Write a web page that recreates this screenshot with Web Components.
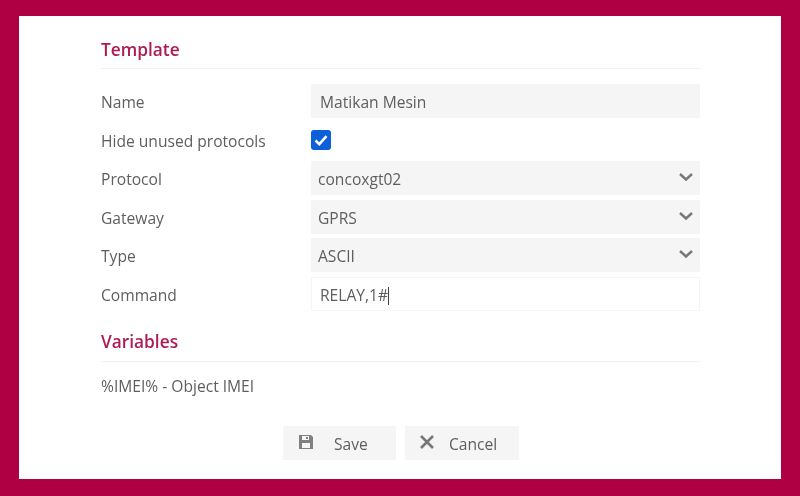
<!DOCTYPE html>
<html><head><meta charset="utf-8">
<style>
html,body{margin:0;padding:0;height:100%}
body{background:#ae0043;font-family:"Open Sans",sans-serif;font-size:15.6px;color:#5e5e5e}
</style></head>
<body>
<template-dialog>
  <section-title>Template</section-title>
  <form-row label="Name"><field-box kind="input" value="Matikan Mesin"></field-box></form-row>
  <form-row label="Hide unused protocols"><check-box></check-box></form-row>
  <form-row label="Protocol"><field-box kind="select" value="concoxgt02"></field-box></form-row>
  <form-row label="Gateway"><field-box kind="select" value="GPRS"></field-box></form-row>
  <form-row label="Type"><field-box kind="select" value="ASCII"></field-box></form-row>
  <form-row label="Command"><field-box kind="active" value="RELAY,1#"></field-box></form-row>
  <section-title second>Variables</section-title>
  <var-note>%IMEI% - Object IMEI</var-note>
  <action-bar>
    <action-button label="Save" icon="save"></action-button>
    <action-button label="Cancel" icon="cancel"></action-button>
  </action-bar>
</template-dialog>
<script>
function def(name, html){
  customElements.define(name, class extends HTMLElement{
    connectedCallback(){
      if(this.shadowRoot) return;
      const r=this.attachShadow({mode:'open'});
      r.innerHTML=typeof html==='function'?html(this):html;
    }
  });
}
def('template-dialog',`<style>
:host{display:block;box-sizing:border-box;width:762px;height:463px;margin:0 0 0 19px;position:relative;top:16px;background:#fff;padding:18px 80px 0 82px;filter:blur(.35px)}
</style><slot></slot>`);
def('section-title',el=>`<style>
:host{display:block;height:35px;box-sizing:border-box;border-bottom:1px solid #f3f3f3;color:#ae1a55;font-weight:600;font-size:17.3px;line-height:31px;margin-bottom:15px}
:host([second]){margin-top:15px;height:36px;margin-bottom:12px}
</style><slot></slot>`);
def('form-row',el=>`<style>
:host{display:grid;grid-template-columns:210px 389px;align-items:center;height:34px;margin-bottom:4.5px}
.l{padding-top:2px}
</style><div class="l">${el.getAttribute('label')}</div><div><slot></slot></div>`);
def('field-box',el=>{
  const k=el.getAttribute('kind'),v=el.getAttribute('value');
  const pad=k==='input'?9:k==='select'?7:8;
  return `<style>
:host{display:flex;align-items:center;justify-content:space-between;box-sizing:border-box;height:34px;background:${k==='active'?'#fff':'#f5f5f5'};${k==='active'?'border:1px solid #f5f5f5;':''}padding:0 6px 0 ${pad}px;border-radius:1px}
.t{padding-top:2px}
.c{display:inline-block;width:1px;height:18px;background:#444;vertical-align:-4px}
svg{display:block;margin-top:-2px}
</style><span class="t">${v}${k==='active'?'<span class="c"></span>':''}</span>${k==='select'?'<svg width="16" height="10" viewBox="0 0 16 10"><path d="M2 2l6 5.5L14 2" fill="none" stroke="#777" stroke-width="2.4"/></svg>':''}`;
});
def('check-box',`<style>
:host{display:block;width:20px;height:20px;background:#0b5fd8;border-radius:3px}
svg{display:block}
</style><svg width="20" height="20" viewBox="0 0 20 20"><path d="M4.5 10.5l3.8 3.6 7.2-8" fill="none" stroke="#fff" stroke-width="2.6"/></svg>`);
def('var-note',`<style>:host{display:block;line-height:26px;height:26px;margin-top:-1px;margin-bottom:1px}</style><slot></slot>`);
def('action-bar',`<style>:host{display:flex;justify-content:center;gap:9px;margin-top:27.5px}</style><slot></slot>`);
const icons={
 save:'<svg width="16" height="14" viewBox="0 0 16 14" style="margin-left:15px;margin-top:-2px"><path fill-rule="evenodd" fill="#808080" d="M1 0h12l2 2v12H1zM4 1v4h7V1zM8 2h2v2H8zM4 8v5h8V8z"/></svg>',
 cancel:'<svg width="16" height="16" viewBox="0 0 16 16" style="margin-left:14px;margin-top:-3px"><path d="M2 2l12 12M14 2L2 14" fill="none" stroke="#777" stroke-width="2.6"/></svg>'
};
def('action-button',el=>{
  const c=el.getAttribute('icon')==='save';
  return `<style>
:host{display:flex;align-items:center;box-sizing:border-box;width:${c?113:114}px;height:34px;background:#f5f5f5;border-radius:1px}
span{margin-left:${c?20:14}px;padding-top:2px}
</style>${icons[el.getAttribute('icon')]}<span>${el.getAttribute('label')}</span>`;
});
</script>
</body></html>
